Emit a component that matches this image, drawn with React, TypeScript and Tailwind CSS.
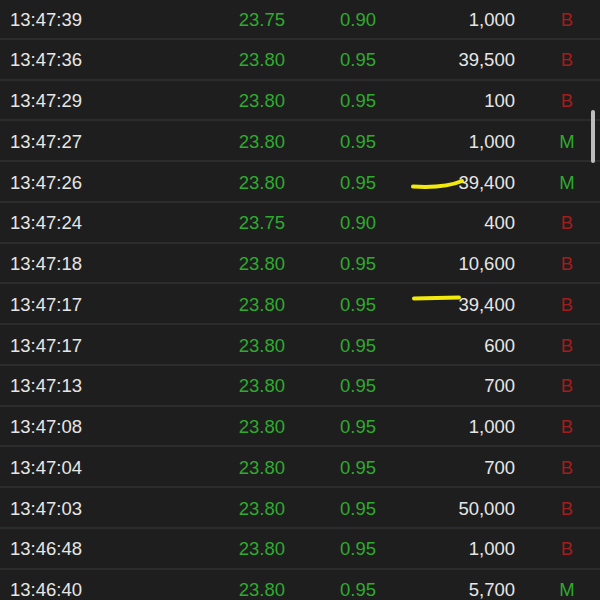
const TRADES = [
  { time: "13:47:39", price: "23.75", change: "0.90", volume: "1,000", side: "B" },
  { time: "13:47:36", price: "23.80", change: "0.95", volume: "39,500", side: "B" },
  { time: "13:47:29", price: "23.80", change: "0.95", volume: "100", side: "B" },
  { time: "13:47:27", price: "23.80", change: "0.95", volume: "1,000", side: "M" },
  { time: "13:47:26", price: "23.80", change: "0.95", volume: "39,400", side: "M" },
  { time: "13:47:24", price: "23.75", change: "0.90", volume: "400", side: "B" },
  { time: "13:47:18", price: "23.80", change: "0.95", volume: "10,600", side: "B" },
  { time: "13:47:17", price: "23.80", change: "0.95", volume: "39,400", side: "B" },
  { time: "13:47:17", price: "23.80", change: "0.95", volume: "600", side: "B" },
  { time: "13:47:13", price: "23.80", change: "0.95", volume: "700", side: "B" },
  { time: "13:47:08", price: "23.80", change: "0.95", volume: "1,000", side: "B" },
  { time: "13:47:04", price: "23.80", change: "0.95", volume: "700", side: "B" },
  { time: "13:47:03", price: "23.80", change: "0.95", volume: "50,000", side: "B" },
  { time: "13:46:48", price: "23.80", change: "0.95", volume: "1,000", side: "B" },
  { time: "13:46:40", price: "23.80", change: "0.95", volume: "5,700", side: "M" },
];

export default function App() {
  return (
    <div
      className="relative w-[600px] h-[600px] overflow-hidden bg-[#1e1e1e] text-[18.5px]"
      style={{ fontFamily: '"Liberation Sans", Arial, sans-serif' }}
    >
      <div className="-mt-[1px]">
        {TRADES.map((t, i) => (
          <div
            key={i}
            className="flex items-center h-[40.75px] pt-[2px] border-b-2 border-[#2c2c2c]"
          >
            <span className="shrink-0 w-[210px] pl-[10px] text-[#e6e6e6]">{t.time}</span>
            <span className="shrink-0 w-[75px] text-right text-[#2eaa2e]">{t.price}</span>
            <span className="shrink-0 w-[91px] text-right text-[#2eaa2e]">{t.change}</span>
            <span className="shrink-0 w-[139px] text-right text-[#e6e6e6]">{t.volume}</span>
            <span
              className={
                t.side === "M"
                  ? "shrink-0 ml-[26px] w-[52px] text-center text-[#2eaa2e]"
                  : "shrink-0 ml-[26px] w-[52px] text-center text-[#a51c1c]"
              }
            >
              {t.side}
            </span>
          </div>
        ))}
      </div>

      {/* highlighter marks drawn over the list */}
      <svg
        className="absolute inset-0 pointer-events-none"
        width="600"
        height="600"
        viewBox="0 0 600 600"
      >
        <path
          d="M413 186.5 C430 187.5 448 187 462 181"
          stroke="#f2ea0c"
          strokeWidth="4"
          strokeLinecap="round"
          fill="none"
        />
        <path
          d="M414 298.5 L459 297.5"
          stroke="#f2ea0c"
          strokeWidth="4"
          strokeLinecap="round"
          fill="none"
        />
      </svg>

      {/* scroll indicator */}
      <div className="absolute left-[591px] top-[110px] w-[4px] h-[53px] rounded-full bg-[#bdbdbd]" />
    </div>
  );
}
